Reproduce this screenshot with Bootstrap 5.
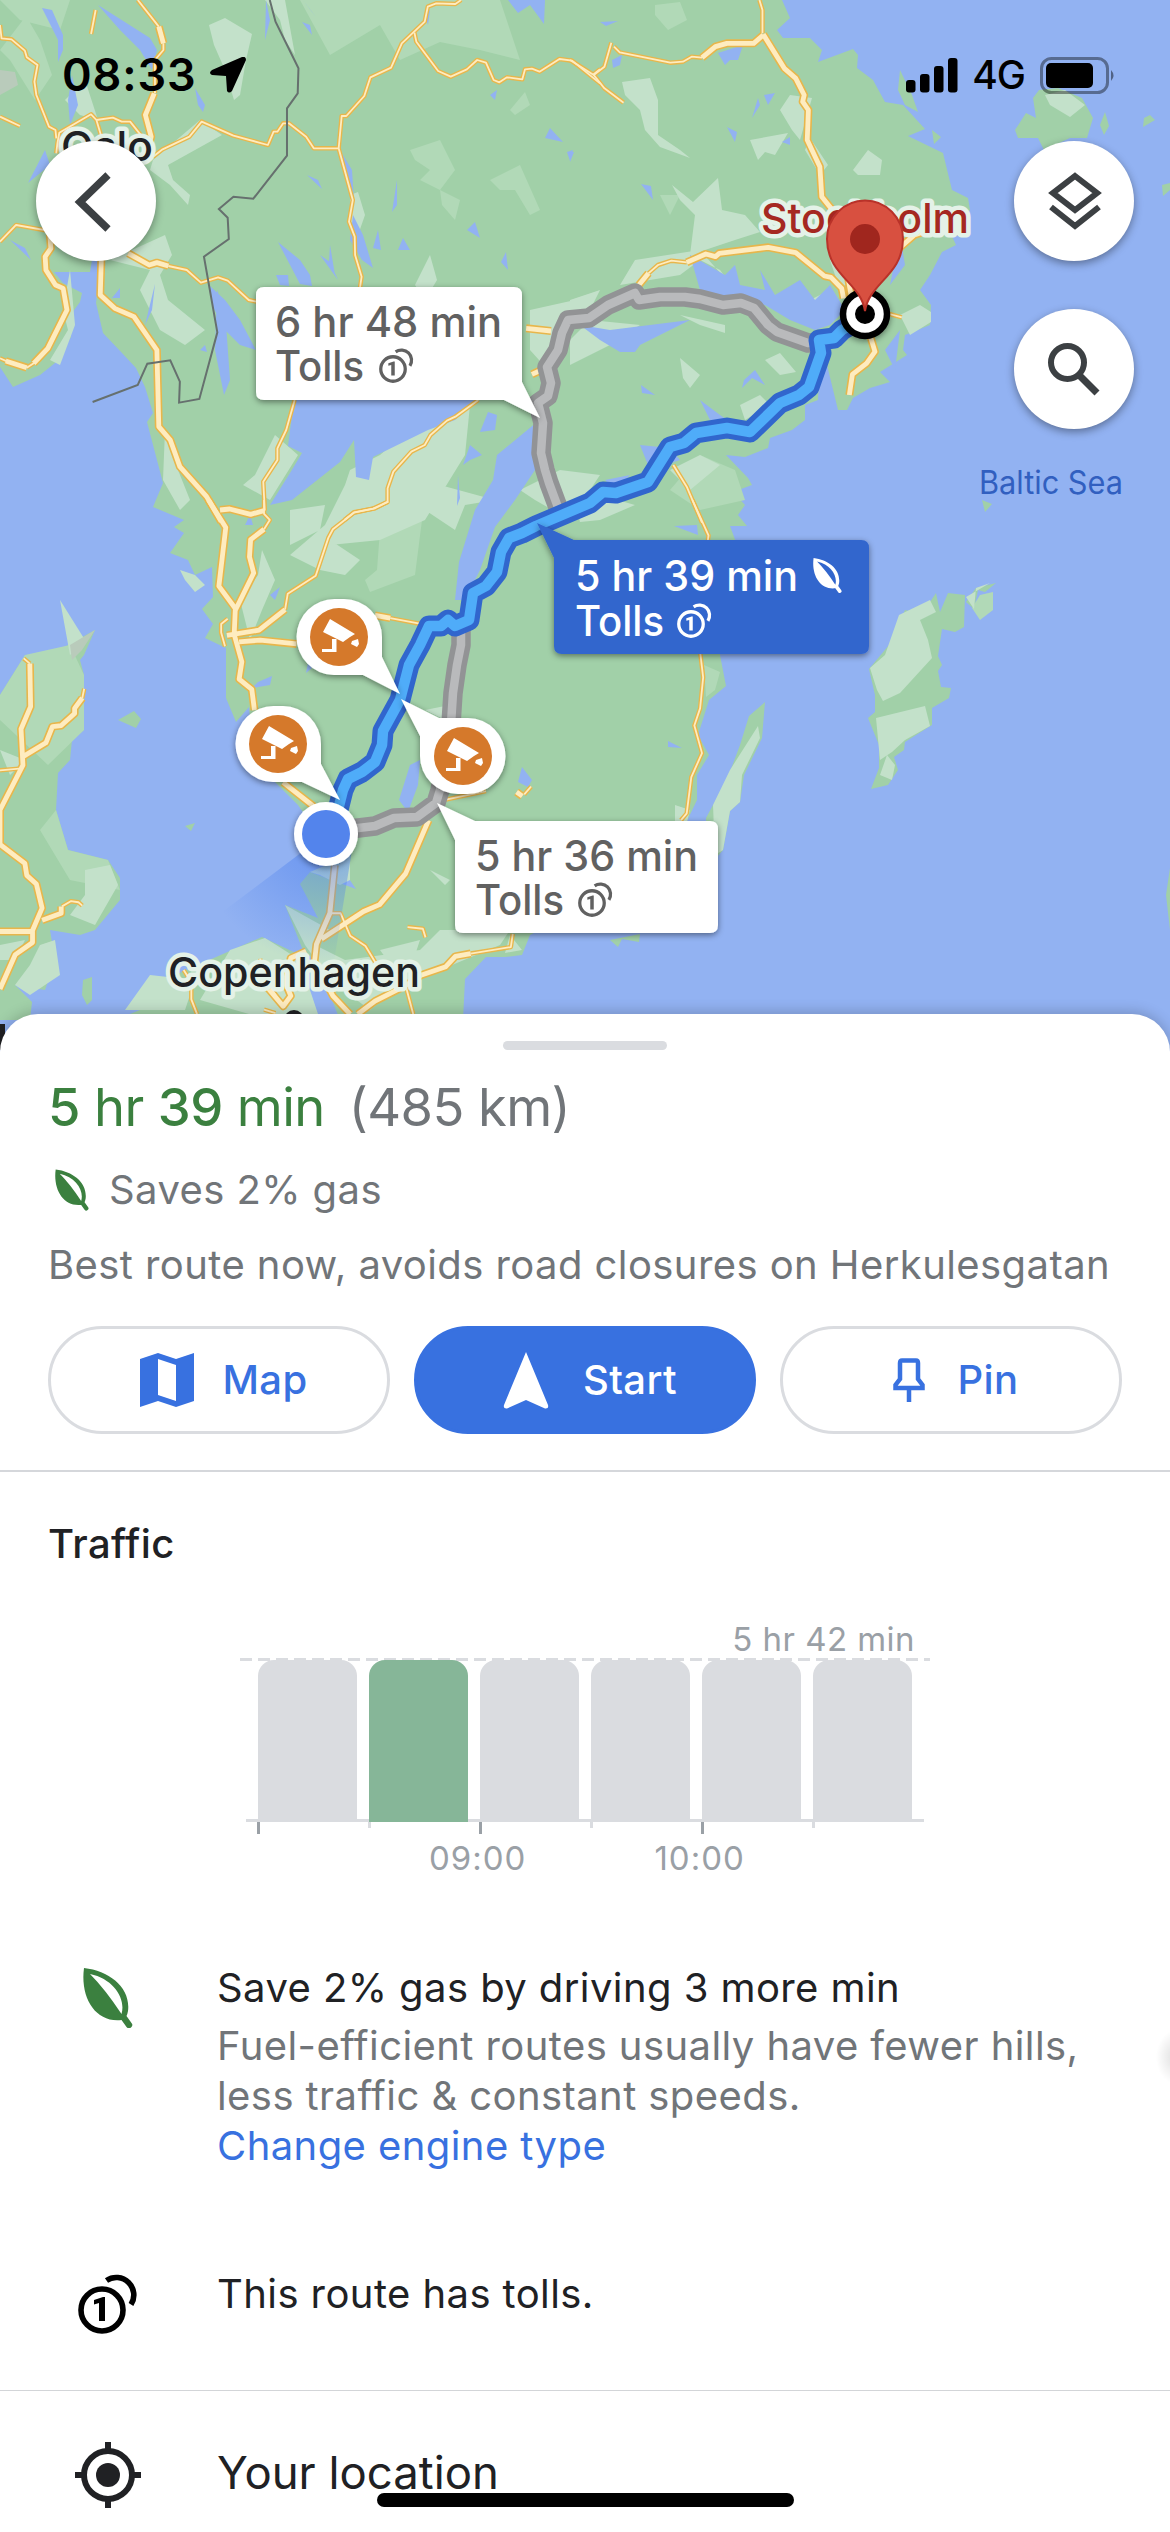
<!DOCTYPE html>
<html lang="en">
<head>
<meta charset="utf-8">
<meta name="viewport" content="width=device-width, initial-scale=1">
<title>Route to Stockholm</title>
<link rel="stylesheet" href="https://cdn.jsdelivr.net/npm/bootstrap@5.3.0/dist/css/bootstrap.min.css">
<style>
  body { font-family: Inter, "Liberation Sans", sans-serif; color: #202124; width: 1170px; height: 2532px; overflow: hidden; }
  .screen { height: 2532px; }
  .map-area { height: 1014px; }
  .map-canvas { left: 0; top: 0; width: 1170px; height: 1060px; }
  .map-canvas path { vector-effect: non-scaling-stroke; }
  .halo { paint-order: stroke; stroke: #e4f2e8; stroke-width: 9px; stroke-linejoin: round; }
  .status-bar { height: 150px; padding: 0 54px 0 62px; color: #000; }
  .clock { font-size: 45px; font-weight: 600; letter-spacing: .9px; }
  .gps-arrow { margin-left: 13px; }
  .net-label { font-size: 39px; font-weight: 500; letter-spacing: -1px; margin: 0 15px 0 14px; }
  .fab { width: 120px; height: 120px; background: #fff; box-shadow: 0 3px 8px rgba(0,0,0,.38); padding: 0; }
  .fab-row { padding: 0 36px; margin-top: -9px; }
  .fab-stack { gap: 48px; }
  .sheet { height: 1518px; border-radius: 38px 38px 0 0; box-shadow: 0 -2px 14px rgba(0,0,0,.2); padding-top: 27px; }
  .grip { width: 164px; height: 9px; background: #dadce0; border-radius: 5px; }
  .gut { padding-left: 48px; padding-right: 48px; }
  .title-line { font-size: 52.5px; line-height: 64px; margin-top: 25px; letter-spacing: -.6px; }
  .go-green { color: #3b803f; }
  .dim { color: #717579; }
  .body-line { font-size: 40px; line-height: 50px; letter-spacing: .42px; }
  .saves { margin-top: 26px; }
  .saves svg { margin: 0 20px 0 7px; }
  .best { margin-top: 25px; }
  .actions { margin-top: 36px; }
  .pill { width: 342px; height: 108px; border-radius: 54px; border: 3px solid #dadce0; color: #3871e0; font-size: 40px; font-weight: 500; letter-spacing: .4px; padding: 0 0 0 10px; }
  .pill.go { background: #3871e0; border-color: #3871e0; color: #fff; }
  .ic-map { margin-right: 28px; } .ic-go { margin-right: 34px; } .ic-pin { margin-right: 32px; }
  .rule2 { height: 2px; background: #d5d7db; margin-top: 36px; }
  .rule1 { height: 1px; background: #d3d5d8; }
  .traffic-head { margin-top: 47px; }
  .chart { width: 690px; margin-left: 240px; margin-top: 50px; color: #9aa0a6; font-size: 33px; line-height: 40px; letter-spacing: .45px; }
  .peak { padding-right: 15px; }
  .plot { height: 164px; margin-top: -1px; padding: 2px 15px 0 18px; gap: 12px;
          background: linear-gradient(#dadce0,#dadce0) 6px 161px/678px 3px no-repeat, repeating-linear-gradient(90deg,#dadce0 0 12px,transparent 12px 18px) 0 0/690px 3px no-repeat; }
  .slot { width: 99px; border-radius: 16px 16px 0 0; background: #dadce0; }
  .slot.now { background: #86b698; }
  .ticks { padding-left: 17px; height: 13px; }
  .tick { width: 3px; height: 12px; background: #9aa0a6; margin-right: 108px; }
  .tick.half { height: 6px; background: #dadce0; }
  .hours { padding-left: 189px; gap: 128px; margin-top: 3px; letter-spacing: 1px; }
  .ico-col { width: 217px; flex: none; }
  .eco { margin-top: 85px; } .eco svg { margin: 5px 0 0 83px; }
  .toll-row { margin-top: 98px; height: 121px; } .toll-row svg { margin: 5px 0 0 78px; }
  .loc-row { margin-top: 51px; } .loc-row svg { margin-left: 75px; }
  .your-loc { font-size: 45.5px; line-height: 62px; }
  .link-blue { color: #3871e0; }
  .home-bar { left: 377px; top: 2493px; width: 417px; height: 14px; border-radius: 7px; background: #000; }
  .edge-shade { right: -26px; top: 2030px; width: 40px; height: 54px; background: radial-gradient(closest-side,rgba(0,0,0,.13),transparent); }
</style>
</head>
<body>
<div class="screen position-relative overflow-hidden bg-white">
<svg width="0" height="0" class="position-absolute">
  <defs>
    <symbol id="coins" viewBox="0 0 60 60"><g fill="none" stroke="currentColor" stroke-width="5.6"><circle cx="24" cy="36" r="21"/><path d="M28.500 6.500A17.500 17.500 0 0 1 53 30.500"/></g><path fill="currentColor" d="M16 26l9-3h2v24h-6V29l-5 1.500z"/></symbol>
    <symbol id="leaf" viewBox="0 0 50 60"><path fill="currentColor" fill-rule="evenodd" d="M1 0C27 3 48 20 45 43q-.5 3-1.500 5l5 7a3.200 3.200 0 0 1-5 4l-5-7C12 55-3 29 1 0zM7 6q15 15 31.500 40C43 31 31 11 7 6z"/></symbol>
    <symbol id="camera" viewBox="0 0 58 58"><circle cx="29" cy="29" r="29" fill="#d5792b"/><g fill="#fff"><path d="M20 11l25 15-5 3-7 5-20-10zM42 33l6-2 1 5-2 3-6-3z"/><path d="M12 41h10V31h4.500v13H12z"/></g></symbol>
  </defs>
</svg>
<div class="map-area position-relative">
<svg class="map-canvas position-absolute" viewBox="0 0 1170 1060" font-family="Inter, sans-serif">
  <defs>
    <radialGradient id="beam" gradientUnits="userSpaceOnUse" cx="326" cy="834" r="130"><stop offset="0" stop-color="#4f82ee" stop-opacity=".65"/><stop offset="1" stop-color="#4f82ee" stop-opacity="0"/></radialGradient>
    <filter id="drop" x="-20%" y="-20%" width="140%" height="150%"><feDropShadow dx="0" dy="2" stdDeviation="3" flood-opacity=".45"/></filter>
    <g id="minor-roads" fill="none" stroke-linejoin="round">
      <g transform="scale(.38265 .33333)">
        <path d="M0 75L4 115L30 118L65 152L70 172L98 195L90 245L95 285L128 380L145 390L147 415M360 0L415 80M427 130V150L405 180V280M250 30L238 102M0 350L52 378M0 725L42 675L125 692M147 460L150 430L155 398L238 343L252 360L265 410M252 360L295 353L318 365H340L375 415"/>
        <path d="M400 470L425 448L495 410L527 365L610 407L700 435L715 395L725 395L740 370H755L800 410L820 445H885L893 348H905L952 288L968 232L1022 203L1050 130L1110 65L1118 20L1140 10L1190 12L1205 0M885 445L922 600L912 665L927 710L928 765L945 830L940 870"/>
        <path d="M1083 98L1088 125L1145 213L1178 230L1220 208L1247 180L1270 188L1290 240L1305 247L1325 232L1365 238L1372 208L1390 206L1410 215L1462 177L1495 182L1568 250M1568 208L1550 224M440 798L488 810L525 848L570 832L595 842L650 900L670 905M770 1200L748 1290L725 1345V1380L688 1445L692 1532M1250 1200L1190 1250L1168 1262L1125 1305L1110 1335L1075 1355L1028 1415L1013 1465V1505L980 1525L925 1537L900 1560M0 1075L30 1090M70 1103L90 1088"/>
      </g>
      <g transform="translate(570 0) scale(.38265 .33333)">
        <path d="M495 0L503 30V100M345 173L318 170L295 185L262 188L130 157L115 140M108 128L90 200L62 225M0 180L62 225L90 265L140 308M205 820L230 795L265 782L305 787M940 690L1040 703M835 942L867 952M270 1395L305 1460L345 1568"/>
      </g>
      <g transform="translate(0 500) scale(.38265 .34439)">
        <path d="M690 0L690 40L705 58L690 85M1015 5L975 25L925 37L870 85L858 110L825 220L752 272L745 318M595 345L578 360V385L588 425M1020 343L1100 360M215 575L220 548M62 460L78 475M162 1180L185 1165L205 1168L215 1178M865 1200H890L915 1265L955 1295L985 1350L1000 1370M1230 1317L1335 1298L1340 1260M1060 1410L1080 1493M1065 1240L1105 1245L1112 1270M515 1493L500 1450V1400L480 1365M1165 870L1270 845M1370 855L1388 832M0 785L50 780M680 1332L685 1380L740 1470M690 1480L720 1490"/>
      </g>
      <g transform="translate(570 500) scale(.38265 .34439)">
        <path d="M320 0L362 103L360 120M340 440L348 515L340 605L325 655L345 735L317 805L305 910L290 930"/>
      </g>
    </g>
    <g id="major-roads" fill="none" stroke-linejoin="round">
      <g transform="scale(.38265 .33333)">
        <path d="M265 770L262 885L300 925L350 950L410 1050L415 1280L445 1320L470 1400L540 1490L578 1565M415 80L427 130M403 280L380 345L395 410L380 480M335 760L390 795L410 788L440 798M130 700L133 745L118 770L120 810L145 855L165 865L175 930L125 1045L88 1090M15 1083L70 1103M575 1530L600 1527L655 1543L690 1532M1375 985L1440 993M1390 1123L1415 1110"/>
      </g>
      <g transform="translate(570 0) scale(.38265 .33333)">
        <path d="M505 103L560 205L590 235L612 285L608 305L623 330L620 420L653 500L658 590L700 650M345 173L380 140L410 130H480L505 105M180 855L205 820M305 787L355 762L380 770L390 760L518 742L590 758L665 828L682 832L710 865L715 895M725 820L735 890M860 745L900 705L940 690M785 1010L797 1055L775 1090L738 1123L730 1185"/>
      </g>
      <g transform="translate(0 500) scale(.38265 .34439)">
        <path d="M545 0L590 80L572 250L615 315L612 390L632 470L625 520L658 550L665 610M690 85L655 115L652 165L663 212L615 320M745 318L677 378L593 393M625 412L680 407L775 418M980 335L1020 343M740 820L820 890M875 1060L862 1200L827 1290L822 1340L870 1440L915 1493M1120 930L1060 1085L992 1175L950 1195L840 1275M78 475L80 600L55 665L60 770L0 900V1000L65 1055L70 1090L95 1115L110 1185L85 1250V1285L40 1320L0 1420M60 745L120 705L137 658L160 655L195 620L195 605L215 575M110 1220L160 1200V1180M0 1253H85M935 1493L980 1455L1060 1410L1100 1380L1165 1355L1190 1325L1230 1317M695 1410L740 1470L760 1440L745 1400L760 1330L800 1310M1350 848L1365 860"/>
      </g>
    </g>
    <path id="route-main" d="M856 322L842 330L834 338L819 340L821 353L809 387L799 395L780 403L750 432L727 428L696 433L684 443L670 447L648 482L616 493L603 492L590 503L536 526L522 533L509 538L501 552L497 572L486 586L473 593L469 620L455 626L448 620L441 626L429 626L420 645L409 665L400 700L389 720L383 731L382 745L375 762L362 772L348 779L343 790L338 810"/>
    <path id="route-alt" d="M822 343L808 343L777 332L768 325L754 308L741 303L723 305L700 299L685 297L660 297L639 300L635 293L608 305L589 318L568 320L562 333L558 350L547 367L551 383L548 396L538 403L543 423L541 453L545 470L549 483L559 510M461 628L461 645L457 665L453 693L451 724M442 780L440 790L436 803L417 817L394 818L375 826L350 829"/>
  </defs>

  <rect width="1170" height="1060" fill="#92b2f2"/>
  <!-- land -->
  <g fill="#a1d0a8">
    <path d="M0 0H782L790 18L777 30L783 38H810L822 50L818 62L853 49L858 55L857 68L873 80L885 102L903 105L925 129L908 136L943 153L952 190L968 198L970 210L950 232L956 245L942 252L930 275L920 290L931 305L930 325L905 335L903 350L907 355L880 372L890 382L870 388L853 398L847 410H838L827 365L820 360L818 400L805 405V420L792 430L770 438L768 448L745 457L726 455L748 478L752 485L733 492L745 505L738 515L747 526H730L737 545L720 655L726 686L709 700L698 735L709 755L697 775V800L685 825L675 860L530 935L522 955L505 957H486L465 979L463 1020H340L318 965L302 948L285 905L318 918L300 884L310 872L356 889L298 805L275 782L254 765L249 707L236 722L226 698L226 648L205 638L213 624L202 609L213 597L212 567L195 575L188 560L170 553L184 533L174 527L184 520L153 507L163 483L147 422L153 413L145 387L136 368L122 353L103 333L96 303L101 260H92L90 272H54L63 283L82 293L80 302L69 317L71 337L55 363L40 375L13 387L0 367Z"/>
    <path d="M0 695L25 655L50 656L68 645L95 630L84 655L80 660L84 675V730L72 740L70 760L58 773L56 810L68 850L108 860L120 878V900L95 930L80 935L50 930L55 960L45 990L15 985L32 1002L30 1020H0Z"/>
    <path d="M175 975L262 937L300 955L310 1020H115L145 1008Z"/>
    <path d="M83 980L92 977V1000L87 1005L82 995ZM118 720L134 711L141 719L136 728ZM185 826L195 823L191 831Z"/>
    <path d="M1039 90L1058 88L1082 98L1093 118L1087 138H1070L1044 150L1038 138H1018L1015 130L1026 113L1036 118L1033 98ZM1100 125L1105 112L1109 126L1104 135ZM1144 118L1150 115L1155 120L1143 127ZM1162 185L1170 183V190L1163 196ZM932 130L941 137L934 144ZM900 70L912 95L918 112L905 105L898 90ZM982 500L992 504L985 512Z"/>
    <path d="M905 610L922 614L936 593L940 612L948 593L965 595L964 627L955 632L942 629L938 656L942 665L938 671L941 687L951 688L949 698L932 708V725L905 742L904 750L894 757L898 770L888 785L871 789L879 768V745L868 718L875 712V695L869 669L889 645Z"/>
    <path d="M749 716L765 702L762 738L744 775L740 802L730 811L723 850L706 870V818L713 805L725 785L740 745ZM966 602L976 588L996 583L985 592L978 590L974 609ZM1170 868L1166 895L1170 930ZM610 940L640 934L639 942L622 939L618 947Z"/>
  </g>
  <!-- pale farmland -->
  <g fill="#b1d9b7">
    <path d="M0 50L26 16L40 40L52 75L35 100L10 60ZM300 0H500L520 60L480 50L440 42L400 60L380 25L330 55ZM0 695L25 655L70 645L84 675V730L48 765L0 720ZM56 810L68 850L108 860L120 890L70 880L40 830ZM700 510L745 500L735 470L700 455L670 490ZM0 0H70L60 30L20 20ZM655 5L680 2L687 20L668 30L655 15ZM660 195L680 195L670 215ZM380 530L422 520L415 575L370 592L365 580L377 570Z"/>
    <path d="M410 150L440 140L455 170L440 190L420 180L430 170L415 160ZM490 180L520 165L540 210L530 215L515 190L500 190ZM510 110L525 92L530 105L515 115ZM440 190L460 200L455 220L442 205Z"/>
    <path d="M980 595L993 592V610L980 620L972 608ZM704 665L720 672L715 690L706 697Z"/>
  </g>
  <g fill="#c3e1ca">
    <path d="M209 25L225 18L252 34L246 60L240 95L234 100L225 70L214 45ZM153 160L200 120L222 135L168 165L173 180L190 195L188 205L170 185L150 170ZM65 100L85 80L98 120L80 115ZM110 260L165 235L172 255L160 275L168 300L205 330L185 345L160 330L140 290L150 270ZM70 270L63 310L68 330L50 360L60 365L75 325ZM165 430L163 480L180 510L190 500L170 450ZM255 475L275 435L298 455L270 500L243 485ZM280 20L265 0H285L295 55L285 40ZM530 310L575 300L560 345L548 370L530 350ZM350 195L358 192L365 215L358 235L350 220ZM415 285L430 255L437 280L425 300ZM440 400L470 405L465 455L425 520L380 540L330 545L300 560L290 555L325 525L345 485L350 470L380 455L420 420ZM330 540L360 560L345 575L320 570L290 555ZM290 510L325 505L320 530L290 545ZM520 490L560 470L600 475L570 520L535 500ZM495 500L465 505L455 530L425 510L440 485ZM180 570L195 575L205 585L195 592L185 580ZM262 550L275 580L262 610L250 640L240 600L258 575Z"/>
    <path d="M622 82L650 78L658 100V135L680 150L690 158L660 147L645 130L640 110L625 95ZM693 202L718 178L722 210L745 215L760 232L735 240L690 255L695 215L680 200L672 185ZM780 110L790 95L812 98L800 140L792 130ZM750 140L788 133L775 155L765 152L758 160ZM810 138L828 165L820 175L805 150ZM853 170L868 150L882 160L880 175L858 175ZM635 260L700 250L735 290L720 270L700 260L680 275L620 285ZM600 290L570 300V320L590 310ZM810 300L830 290L835 320L820 315ZM680 315L725 325V333L700 325ZM590 320L640 325L610 345L570 365V340ZM680 358L700 375L690 388L683 378ZM765 360L780 353L796 372L780 375ZM740 405L760 395L770 405L745 420ZM670 470L700 455L720 465L690 490L680 480ZM900 315L920 305L931 312V322L910 335ZM830 260L850 255L850 280L840 290ZM575 500L600 495L635 505L600 520L580 522Z"/>
    <path d="M899 615L930 600L936 612L920 620L928 640L932 658L900 693L883 701L877 690L870 668L885 655ZM876 718L925 706L930 726L905 740L892 752L880 760ZM887 755L895 765L892 780L880 775ZM758 726L760 738L742 775L740 802L730 811L723 850L715 855L713 805L730 770ZM990 583L976 588L974 609L966 597ZM675 805L690 810L685 830L675 825ZM1045 95L1065 90L1085 105L1070 117L1050 105Z"/>
    <path d="M60 600L85 640L70 655ZM85 870L110 865L118 885L95 925L70 915L85 895ZM40 945L55 940L60 975L30 995L15 985L30 965ZM0 750L25 760L10 775ZM0 945L25 940L15 960L0 960ZM310 872L350 855V880L340 885L320 875ZM285 905L330 930L315 945L345 960L420 950L440 930H510L500 945L440 970L400 985L370 1010L330 980L305 945ZM230 950L265 938L300 960L320 1020H270L200 1000ZM425 710L450 705L445 720ZM480 855L500 848L500 860ZM430 870L450 880L445 885ZM125 1010L150 975L195 980L185 1010ZM380 950L420 940L405 985ZM510 935L522 950L505 953Z"/>
  </g>
  <g fill="#b9cbbb"><path d="M0 70L15 72L18 85L0 95ZM95 630L70 645L72 660L82 650Z"/></g>
  <!-- lakes -->
  <g fill="#92b2f2">
    <path d="M98 5L150 38L157 50L152 70L140 50L120 30ZM42 8L52 10L63 35V50L58 62V40ZM68 100L72 75L78 105L70 125ZM195 88L205 105L203 112L198 105ZM302 22L310 25L312 35ZM266 0L270 20L265 40ZM303 0L316 17L312 12ZM425 15L430 10L428 25ZM508 0H545L544 24L530 5L518 13ZM490 95L497 90L495 100ZM550 128L563 142L545 138ZM567 152L573 150L570 161ZM307 175L318 180L322 189ZM397 180V205L392 212ZM340 150L352 170L354 200L350 190ZM353 215L363 235L373 268L362 260L350 240ZM378 230L381 250L373 248ZM403 238L410 250L398 250ZM475 222L480 238L467 230ZM506 252L508 270L501 262ZM278 242L300 260L310 275L312 286L300 284ZM320 255L330 262L338 280ZM330 245L335 275L329 262ZM276 275L288 275L289 286L280 285ZM210 286L225 300L240 320L256 350L240 345L225 330L212 305ZM217 290L225 310L230 380L224 395L215 350ZM10 240L25 248L31 260ZM45 150L50 165L28 183ZM120 288V298H112ZM155 284L152 310L145 325ZM200 350L205 345L207 352ZM488 412L497 415L495 430L480 432ZM470 445L482 455L470 460L463 465ZM458 475L460 498L457 506Z"/>
    <path d="M294 400L288 446L302 453L290 473L270 505L292 500L340 462L354 440L356 477L369 480L373 457L428 430L455 420L480 398V380H294Z"/>
    <path d="M537 422L497 455L493 480L475 510L459 562L455 600L465 600L480 570L495 527L515 500L535 470Z"/>
    <path d="M690 255L725 275L735 265L740 285L765 290L760 270L775 295L800 280L815 300L830 285L845 310L830 325L815 330L790 320L765 305L735 303L700 290ZM580 325L610 330L650 325L690 320L670 330L640 345L635 352H620L600 340ZM744 380L755 370L765 385L752 378L742 388ZM641 385L655 395L642 393ZM700 400L720 415L735 425L710 420ZM718 53L743 45L738 60H730L725 65ZM612 60L622 55L620 65L613 68ZM764 95L775 93L768 105ZM758 98L760 105L752 118ZM727 127L737 132L735 142ZM641 184L651 186L653 200ZM600 22L618 21L606 26ZM640 445L670 448L680 460L650 470ZM880 240L900 235L905 265L890 285L895 260ZM900 330L895 370L885 350ZM605 480L630 475L615 490ZM555 590L565 590V600ZM570 152L574 152L570 162ZM782 142L790 137V145Z"/>
    <path d="M410 765L420 760L418 785L408 812L399 800ZM522 767L532 780L528 787L518 782ZM258 682L272 676L270 685L252 688ZM270 595L280 587L275 600ZM308 663L312 668L306 673ZM668 741L682 748L668 747ZM674 526L697 525L698 535ZM250 515L253 525L245 525Z"/>
  </g>
  <use href="#minor-roads" stroke="#e8b64b" stroke-width="4.500"/>
  <use href="#major-roads" stroke="#e8b64b" stroke-width="8"/>
  <use href="#minor-roads" stroke="#feecc0" stroke-width="1.800"/>
  <use href="#major-roads" stroke="#feecc0" stroke-width="4.800"/>
  <path transform="scale(.38265 .33333)" fill="none" stroke="#66706e" stroke-width="2" d="M705 0L720 65L780 205L778 280L750 325V467L662 596L610 590L572 627L595 653L598 717L533 770L568 997L521 1197L468 1208L470 1145L445 1081L385 1091L360 1155L242 1206"/>

  <g fill="none" stroke-linejoin="round">
    <use href="#route-alt" stroke="#929395" stroke-width="19.500"/>
    <use href="#route-alt" stroke="#b9babc" stroke-width="8.500"/>
    <use href="#route-main" stroke="#3166cd" stroke-width="21"/>
    <use href="#route-main" stroke="#4facf9" stroke-width="10.500"/>
  </g>
  <path d="M326 834L205 925Q280 990 332 974L352 850Z" fill="url(#beam)"/>

  <!-- place names -->
  <g class="halo" font-weight="500" font-size="41">
    <text x="61" y="161" textLength="92" lengthAdjust="spacingAndGlyphs" fill="#202124">Oslo</text>
    <text x="761" y="233" textLength="208" lengthAdjust="spacingAndGlyphs" fill="#a52821">Stockholm</text>
    <text x="168" y="987" textLength="252" lengthAdjust="spacingAndGlyphs" fill="#202124">Copenhagen</text>
  </g>
  <circle cx="294" cy="1020" r="8" fill="#fff" stroke="#202124" stroke-width="4"/>
  <path d="M0 1024H5V1050H0Z" fill="#202124"/>
  <text x="979" y="494" textLength="144" lengthAdjust="spacingAndGlyphs" font-size="32" fill="#315fc0">Baltic Sea</text>

  <!-- destination -->
  <g filter="url(#drop)"><circle cx="865" cy="314" r="22" fill="#fff" stroke="#000" stroke-width="6.500"/><circle cx="865" cy="314" r="10" fill="#000"/></g>
  <path d="M865 311C861 283 827 275 827 239A38 38.500 0 0 1 903 239C903 275 869 283 865 311Z" fill="#d85040" stroke="#b93229" stroke-width="2"/>
  <circle cx="865" cy="239" r="15" fill="#a0261e"/>

  <!-- route labels -->
  <g font-size="42" font-weight="500">
    <g filter="url(#drop)" fill="#fff">
      <path d="M264 287H514Q522 287 522 295V382L540 418L504 400H264Q256 400 256 392V295Q256 287 264 287Z"/>
      <path d="M437 803L475 821H710Q718 821 718 829V925Q718 933 710 933H463Q455 933 455 925V840Z"/>
      <path d="M537 523L574 540H861Q869 540 869 548V646Q869 654 861 654H562Q554 654 554 646V558Z" fill="#3166cd"/>
    </g>
    <g fill="#616161" color="#616161">
      <text x="275" y="337" textLength="227" lengthAdjust="spacingAndGlyphs">6 hr 48 min</text><text x="275" y="381" textLength="89" lengthAdjust="spacingAndGlyphs">Tolls</text>
      <use href="#coins" x="379" y="348" width="35" height="35"/>
      <text x="475" y="871" textLength="223" lengthAdjust="spacingAndGlyphs">5 hr 36 min</text><text x="475" y="915" textLength="89" lengthAdjust="spacingAndGlyphs">Tolls</text>
      <use href="#coins" x="578" y="882" width="35" height="35"/>
    </g>
    <g fill="#fff" color="#fff">
      <text x="575" y="591" textLength="223" lengthAdjust="spacingAndGlyphs">5 hr 39 min</text><text x="575" y="636" textLength="89" lengthAdjust="spacingAndGlyphs">Tolls</text>
      <use href="#coins" x="677" y="603" width="35" height="35"/><use href="#leaf" x="813" y="558" width="29" height="35"/>
    </g>
  </g>
  <!-- cameras and own position -->
  <g filter="url(#drop)" fill="#fff">
    <path d="M335 599H344A38 38 0 0 1 382 637V657L400 694L363 675H334A38 38 0 0 1 335 599Z"/>
    <path d="M274 706H283A38 38 0 0 1 321 744V764L340 800L302 782H273A38 38 0 0 1 274 706Z"/>
    <path d="M401 699L439 718H468A38 38 0 0 1 467 794H458A38 38 0 0 1 420 756V736Z"/>
    <circle cx="326" cy="834" r="32"/>
  </g>
  <circle cx="326" cy="834" r="24" fill="#5384ec"/>
  <use href="#camera" x="310" y="608" width="58" height="58"/><use href="#camera" x="249" y="715" width="58" height="58"/><use href="#camera" x="434" y="727" width="58" height="58"/>
</svg>

<div class="position-relative">
  <div class="status-bar d-flex align-items-center">
    <span class="clock">08:33</span>
    <svg class="gps-arrow" width="36" height="36" viewBox="0 0 36 36"><path d="M32 0q4-1 4 3L22 34q-3 3-5 0l-1-15L2 18q-4-2 0-5z"/></svg>
    <svg class="ms-auto" width="52" height="35" viewBox="0 0 52 35"><rect y="22" width="9.500" height="12.500" rx="3"/><rect x="14" y="16" width="9.500" height="18.500" rx="3"/><rect x="28" y="8" width="9.500" height="26.500" rx="3"/><rect x="42" width="9.500" height="34.500" rx="3"/></svg>
    <span class="net-label">4G</span>
    <svg width="76" height="37" viewBox="0 0 76 37"><rect x="1.500" y="1.500" width="66" height="34" rx="10" fill="none" stroke="#000" stroke-opacity=".4" stroke-width="3"/><rect x="6" y="6" width="47" height="25" rx="5"/><path d="M71 13q5 5.500 0 11z" fill-opacity=".45"/></svg>
  </div>
  <div class="fab-row d-flex justify-content-between align-items-start">
    <button class="btn fab rounded-circle" aria-label="Back"><svg width="120" height="120" viewBox="0 0 120 120"><path d="M71 33L43 60L71 87" fill="none" stroke="#3c4043" stroke-width="7.500"/></svg></button>
    <div class="d-flex flex-column fab-stack">
      <button class="btn fab rounded-circle" aria-label="Layers"><svg width="120" height="120" viewBox="0 0 120 120" fill="none" stroke="#3c4043" stroke-width="6"><path d="M60 34L82 51L60 68L38 51ZM36 65L60 84L84 65"/></svg></button>
      <button class="btn fab rounded-circle" aria-label="Search"><svg width="120" height="120" viewBox="0 0 120 120" fill="none" stroke="#3c4043"><circle cx="52.500" cy="52.500" r="16.500" stroke-width="6"/><path d="M65 66L82 83" stroke-width="7"/></svg></button>
    </div>
  </div>
</div>
</div>

<main class="sheet position-relative bg-white">
  <div class="grip mx-auto"></div>
  <section class="gut">
    <div class="title-line"><span class="go-green"><span class="fw-medium">5</span> hr <span class="fw-medium">39</span> min</span><span class="dim ms-4">(485 km)</span></div>
    <div class="d-flex align-items-center body-line dim saves"><svg class="go-green" width="34" height="42"><use href="#leaf"/></svg><span>Saves 2% gas</span></div>
    <div class="body-line dim text-nowrap best">Best route now, avoids road closures on Herkulesgatan</div>
    <div class="actions d-flex justify-content-between">
      <button class="btn pill d-flex align-items-center justify-content-center"><svg class="ic-map" width="54" height="54" viewBox="0 0 54 54" fill="currentColor"><path fill-rule="evenodd" d="M0 6L18 0L36 6L54 0V48L36 54L18 48L0 54ZM18 6V42L36 48V12Z"/></svg>Map</button>
      <button class="btn pill go d-flex align-items-center justify-content-center"><svg class="ic-go" width="46" height="57" viewBox="0 0 46 57" fill="currentColor"><path d="M23 0L45 53Q46 57 42 56.500L23 48L4 56.500Q0 57 1 53Z"/></svg>Start</button>
      <button class="btn pill d-flex align-items-center justify-content-center"><svg class="ic-pin" width="32" height="45" viewBox="0 0 32 45" fill="none" stroke="currentColor" stroke-width="4.500"><path d="M9 2.500H23Q25 2.500 25 5V21L29.500 27V30H2.500V27L7 21V5Q7 2.500 9 2.500ZM16 30V44"/></svg>Pin</button>
    </div>
  </section>
  <div class="rule2"></div>
  <section>
    <div class="gut body-line fw-medium traffic-head">Traffic</div>
    <div class="chart">
      <div class="text-end peak">5 hr 42 min</div>
      <div class="plot d-flex"><div class="slot"></div><div class="slot now"></div><div class="slot"></div><div class="slot"></div><div class="slot"></div><div class="slot"></div></div>
      <div class="ticks d-flex"><i class="tick"></i><i class="tick half"></i><i class="tick"></i><i class="tick half"></i><i class="tick"></i><i class="tick half"></i></div>
      <div class="hours d-flex"><span>09:00</span><span>10:00</span></div>
    </div>
  </section>
  <section class="d-flex eco">
    <div class="ico-col go-green"><svg width="50" height="60"><use href="#leaf"/></svg></div>
    <div class="body-line text-nowrap"><div class="mb-2">Save 2% gas by driving 3 more min</div><div class="dim">Fuel-efficient routes usually have fewer hills,<br>less traffic &amp; constant speeds.</div><a class="link-blue text-decoration-none" href="#">Change engine type</a></div>
  </section>
  <section class="d-flex toll-row">
    <div class="ico-col text-black"><svg width="60" height="60"><use href="#coins"/></svg></div>
    <div class="body-line">This route has tolls.</div>
  </section>
  <div class="rule1"></div>
  <section class="d-flex loc-row">
    <div class="ico-col"><svg width="66" height="66" viewBox="0 0 66 66" fill="none" stroke="#202124" stroke-width="6"><circle cx="33" cy="33" r="24"/><circle cx="33" cy="33" r="12" fill="#202124" stroke="none"/><path d="M33 0V8M33 58V66M0 33H8M58 33H66"/></svg></div>
    <div class="your-loc">Your location</div>
  </section>
</main>
<div class="edge-shade position-absolute"></div>
<div class="home-bar position-absolute"></div>
</div>
<script src="https://cdn.jsdelivr.net/npm/bootstrap@5.3.0/dist/js/bootstrap.bundle.min.js"></script>
</body>
</html>
